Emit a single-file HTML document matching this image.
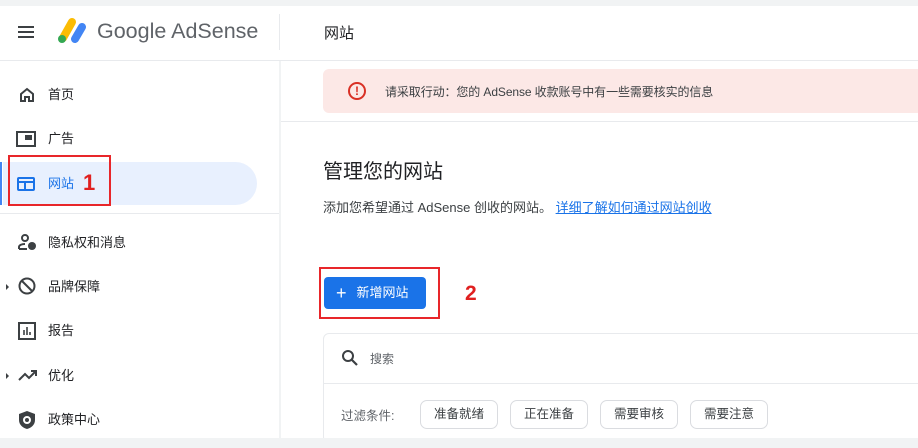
<!DOCTYPE html>
<html><head><meta charset="utf-8"><style>
*{margin:0;padding:0;box-sizing:border-box}
body{width:918px;height:448px;overflow:hidden;background:#fff;font-family:"Liberation Sans","Noto Sans CJK SC",sans-serif;color:#3c4043;position:relative}
.a{position:absolute}
.nav{position:absolute;left:48px;font-size:13px;color:#202124}
.ic{position:absolute;left:18px}
.chip{width:78px;height:29px;border:1px solid #dadce0;border-radius:7px;font-size:12.5px;line-height:27px;text-align:center;color:#3c4043}
</style></head><body>
<div class="a" style="left:0;top:0;width:918px;height:6px;background:#f1f3f4"></div>
<!-- header -->
<div class="a" style="left:18px;top:26px;width:16px;height:2px;background:#3c4043;box-shadow:0 5px 0 #3c4043,0 10px 0 #3c4043"></div>
<svg class="a" style="left:54px;top:16px" width="34" height="28" viewBox="0 0 34 28">
<line x1="18" y1="6" x2="9" y2="22" stroke="#fbbc04" stroke-width="8" stroke-linecap="round"/>
<line x1="28" y1="11" x2="21" y2="23" stroke="#4285f4" stroke-width="8" stroke-linecap="round"/>
<circle cx="8" cy="23" r="4" fill="#34a853"/></svg>
<div class="a" style="left:97px;top:19px;font-size:21.5px;color:#5f6368">Google AdSense</div>
<div class="a" style="left:279px;top:14px;width:1px;height:36px;background:#e8eaed"></div>
<div class="a" style="left:324px;top:22px;font-size:15px;color:#202124">网站</div>
<div class="a" style="left:0;top:60px;width:918px;height:1px;background:#e8eaed"></div>
<!-- sidebar -->
<div class="a" style="left:279px;top:61px;width:2px;height:377px;background:#f1f3f4"></div>
<svg class="ic" style="top:86px" width="18" height="18" viewBox="0 0 18 18"><path d="M3 8L9 3l6 5v7H11v-4H7v4H3z" fill="none" stroke="#3c4043" stroke-width="2"/></svg>
<div class="nav" style="top:84px">首页</div>
<div class="a" style="left:16px;top:131px;width:20px;height:16px;border:2px solid #3c4043"></div>
<div class="a" style="left:25px;top:135px;width:7px;height:5px;background:#3c4043"></div>
<div class="nav" style="top:128px">广告</div>
<div class="a" style="left:3px;top:162px;width:254px;height:43px;background:#e8f0fe;border-radius:0 22px 22px 0"></div>
<div class="a" style="left:0;top:162px;width:2px;height:43px;background:#4285f4"></div>
<div class="a" style="left:17px;top:177px;width:18px;height:14px;border:2px solid #1a73e8;border-radius:2px"></div>
<div class="a" style="left:17px;top:181px;width:18px;height:2px;background:#1a73e8"></div>
<div class="a" style="left:24px;top:183px;width:2px;height:7px;background:#1a73e8"></div>
<div class="nav" style="top:173px;color:#1a73e8">网站</div>
<div class="a" style="left:83px;top:170px;font-size:22px;font-weight:bold;color:#e02020">1</div>
<div class="a" style="left:8px;top:155px;width:103px;height:51px;border:2px solid #e8262a"></div>
<div class="a" style="left:0;top:213px;width:279px;height:1px;background:#e8eaed"></div>
<svg class="ic" style="top:233px" width="20" height="18" viewBox="0 0 20 18"><circle cx="7" cy="5" r="3" fill="none" stroke="#3c4043" stroke-width="2"/><path d="M1 16v-2c0-2 3-3 6-3" fill="none" stroke="#3c4043" stroke-width="2"/><path d="M1 16h8" stroke="#3c4043" stroke-width="2"/><circle cx="14" cy="13" r="4" fill="#3c4043"/></svg>
<div class="nav" style="top:232px">隐私权和消息</div>
<div class="a" style="left:6px;top:284px;border-left:3px solid #3c4043;border-top:3px solid transparent;border-bottom:3px solid transparent"></div>
<svg class="ic" style="top:277px" width="18" height="18" viewBox="0 0 18 18"><circle cx="9" cy="9" r="7.5" fill="none" stroke="#3c4043" stroke-width="2"/><line x1="4" y1="4" x2="14" y2="14" stroke="#3c4043" stroke-width="2"/></svg>
<div class="nav" style="top:276px">品牌保障</div>
<svg class="ic" style="top:322px" width="18" height="18" viewBox="0 0 18 18"><rect x="1" y="1" width="16" height="16" fill="none" stroke="#3c4043" stroke-width="2"/><path d="M6 13V8M9 13V5M12 13v-3" stroke="#3c4043" stroke-width="1.6"/></svg>
<div class="nav" style="top:320px">报告</div>
<div class="a" style="left:6px;top:373px;border-left:3px solid #3c4043;border-top:3px solid transparent;border-bottom:3px solid transparent"></div>
<svg class="ic" style="top:368px" width="20" height="14" viewBox="0 0 20 14"><path d="M1 12l6-6 4 4 7-7M13 3h5v5" fill="none" stroke="#3c4043" stroke-width="2"/></svg>
<div class="nav" style="top:365px">优化</div>
<svg class="ic" style="top:410px" width="18" height="20" viewBox="0 0 18 20"><path d="M9 1l8 3v6c0 5-4 8-8 9-4-1-8-4-8-9V4z" fill="#3c4043"/><circle cx="9" cy="10" r="3" fill="none" stroke="#fff" stroke-width="2"/></svg>
<div class="nav" style="top:409px">政策中心</div>
<!-- content -->
<div class="a" style="left:323px;top:69px;width:600px;height:44px;background:#fce8e6;border-radius:6px"></div>
<div class="a" style="left:348px;top:82px;width:18px;height:18px;border:2px solid #d93025;border-radius:50%;color:#d93025;font-size:12px;font-weight:bold;text-align:center;line-height:14px">!</div>
<div class="a" style="left:385px;top:83px;font-size:12px;letter-spacing:-0.1px;color:#3c4043">请采取行动：您的 AdSense 收款账号中有一些需要核实的信息</div>
<div class="a" style="left:281px;top:121px;width:637px;height:1px;background:#e8eaed"></div>
<div class="a" style="left:323px;top:155px;font-size:20px;color:#202124">管理您的网站</div>
<div class="a" style="left:323px;top:197px;font-size:13px;color:#3c4043">添加您希望通过 AdSense 创收的网站。 <span style="color:#1a73e8;text-decoration:underline">详细了解如何通过网站创收</span></div>
<div class="a" style="left:324px;top:277px;width:102px;height:32px;background:#1a73e8;border-radius:4px;color:#fff;font-size:13px;line-height:32px;padding-left:12px"><span style="font-size:18px;vertical-align:-2px;margin-right:10px">+</span>新增网站</div>
<div class="a" style="left:319px;top:267px;width:121px;height:52px;border:2px solid #e8262a"></div>
<div class="a" style="left:465px;top:282px;font-size:21px;font-weight:bold;color:#e02020">2</div>
<div class="a" style="left:323px;top:333px;width:600px;height:110px;border:1px solid #e8eaed;border-radius:6px"></div>
<div class="a" style="left:323px;top:383px;width:600px;height:1px;background:#e8eaed"></div>
<svg class="a" style="left:341px;top:349px" width="18" height="18" viewBox="0 0 18 18"><circle cx="7" cy="7" r="5" fill="none" stroke="#3c4043" stroke-width="2"/><line x1="11" y1="11" x2="16" y2="16" stroke="#3c4043" stroke-width="2.2"/></svg>
<div class="a" style="left:370px;top:350px;font-size:12px;color:#5f6368">搜索</div>
<div class="a" style="left:341px;top:405px;font-size:12.5px;color:#5f6368">过滤条件:</div>
<div class="a" style="left:420px;top:400px;display:flex;gap:12px">
<div class="chip">准备就绪</div><div class="chip">正在准备</div><div class="chip">需要审核</div><div class="chip">需要注意</div>
</div>
<div class="a" style="left:0;top:438px;width:918px;height:10px;background:#f1f3f4"></div>
</body></html>
